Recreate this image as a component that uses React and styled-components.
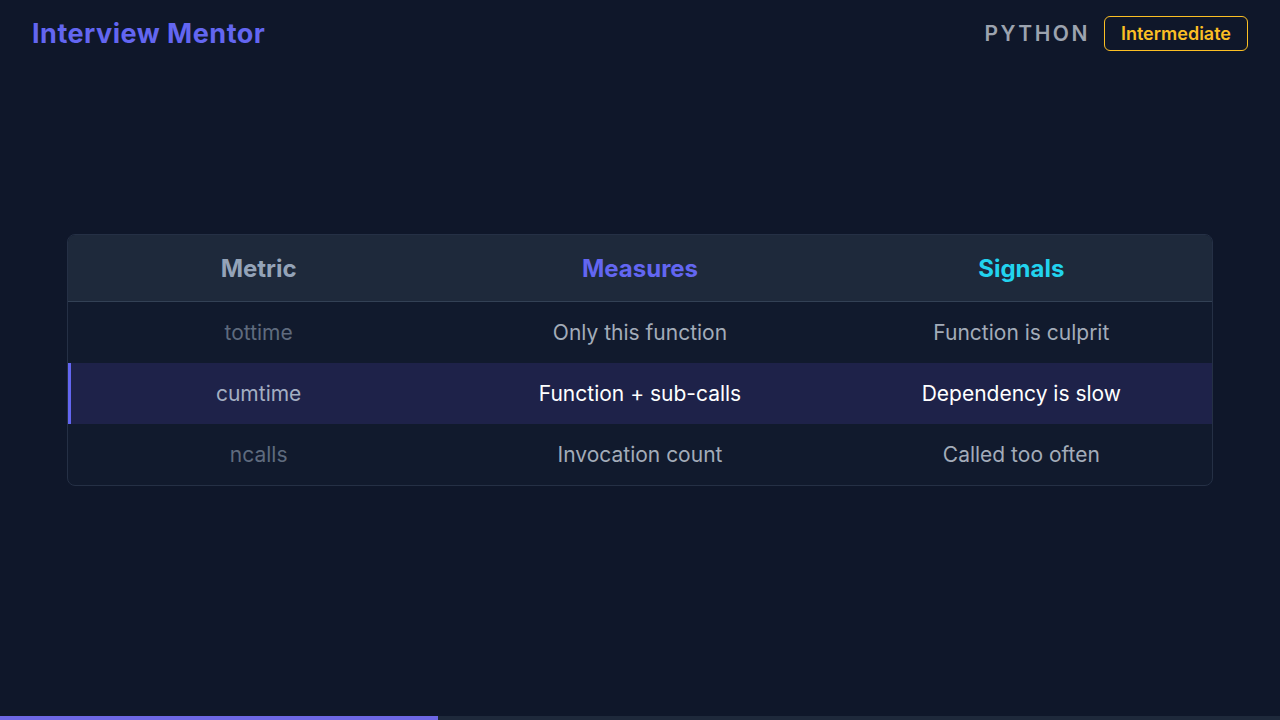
import React from 'react';
import styled, { createGlobalStyle } from 'styled-components';

const Global = createGlobalStyle`
  html, body { margin: 0; background: #0f172a; }
  body { font-family: Inter, 'Noto Sans', sans-serif; }
`;

const Page = styled.div`
  width: 1280px;
  height: 720px;
  position: relative;
  display: flex;
  flex-direction: column;
  overflow: hidden;
`;

const TopBar = styled.header`
  height: 66px;
  padding: 0 32px;
  display: flex;
  align-items: center;
  justify-content: space-between;
`;

const Brand = styled.div`
  color: #6366f1;
  font-size: 27px;
  font-weight: 700;
  letter-spacing: 0.5px;
`;

const Meta = styled.div`
  display: flex;
  align-items: center;
  gap: 14px;
`;

const Lang = styled.span`
  color: #9ca3af;
  font-size: 21px;
  font-weight: 600;
  letter-spacing: 2.5px;
`;

const Badge = styled.span`
  border: 1.5px solid #fbbf24;
  border-radius: 6px;
  color: #fbbf24;
  font-size: 18px;
  font-weight: 600;
  padding: 6px 16px;
`;

const Main = styled.main`
  flex: 1;
  padding: 168px 67px 0;
`;

const Table = styled.div`
  border: 1px solid #253045;
  border-radius: 8px;
  overflow: hidden;
  background: #111a2d;
`;

const Row = styled.div`
  display: grid;
  grid-template-columns: repeat(3, 1fr);
  align-items: center;
  height: ${p => (p.$head ? 66 : 61)}px;
  background: ${p => (p.$head ? '#1e293b' : p.$active ? '#1e2249' : 'transparent')};
  border-bottom: ${p => (p.$head ? '1px solid #334155' : 'none')};
  box-shadow: ${p => (p.$active ? 'inset 3px 0 0 #6366f1' : 'none')};
`;

const Head = styled.div`
  text-align: center;
  font-size: 24px;
  font-weight: 700;
  color: ${p => p.$color};
`;

const Cell = styled.div`
  text-align: center;
  font-size: 21px;
  color: ${p => p.$color};
`;

const Track = styled.div`
  position: absolute;
  left: 0;
  right: 0;
  bottom: 0;
  height: 4px;
  background: #1e293b;
`;

const Fill = styled.div`
  height: 100%;
  background: #6d67e4;
`;

const rows = [
  ['tottime', 'Only this function', 'Function is culprit'],
  ['cumtime', 'Function + sub-calls', 'Dependency is slow', true],
  ['ncalls', 'Invocation count', 'Called too often'],
];

export default function App() {
  return (
    <Page>
      <Global />
      <TopBar>
        <Brand>Interview Mentor</Brand>
        <Meta>
          <Lang>PYTHON</Lang>
          <Badge>Intermediate</Badge>
        </Meta>
      </TopBar>
      <Main>
        <Table>
          <Row $head>
            <Head $color="#94a3b8">Metric</Head>
            <Head $color="#6366f1">Measures</Head>
            <Head $color="#22d3ee">Signals</Head>
          </Row>
          {rows.map(([m, a, b, active]) => (
            <Row key={m} $active={active}>
              <Cell $color={active ? '#a3aec2' : '#5f6b7e'}>{m}</Cell>
              <Cell $color={active ? '#ffffff' : '#a3acb9'}>{a}</Cell>
              <Cell $color={active ? '#ffffff' : '#a3acb9'}>{b}</Cell>
            </Row>
          ))}
        </Table>
      </Main>
      <Track>
        <Fill style={{ width: '438px' }} />
      </Track>
    </Page>
  );
}
